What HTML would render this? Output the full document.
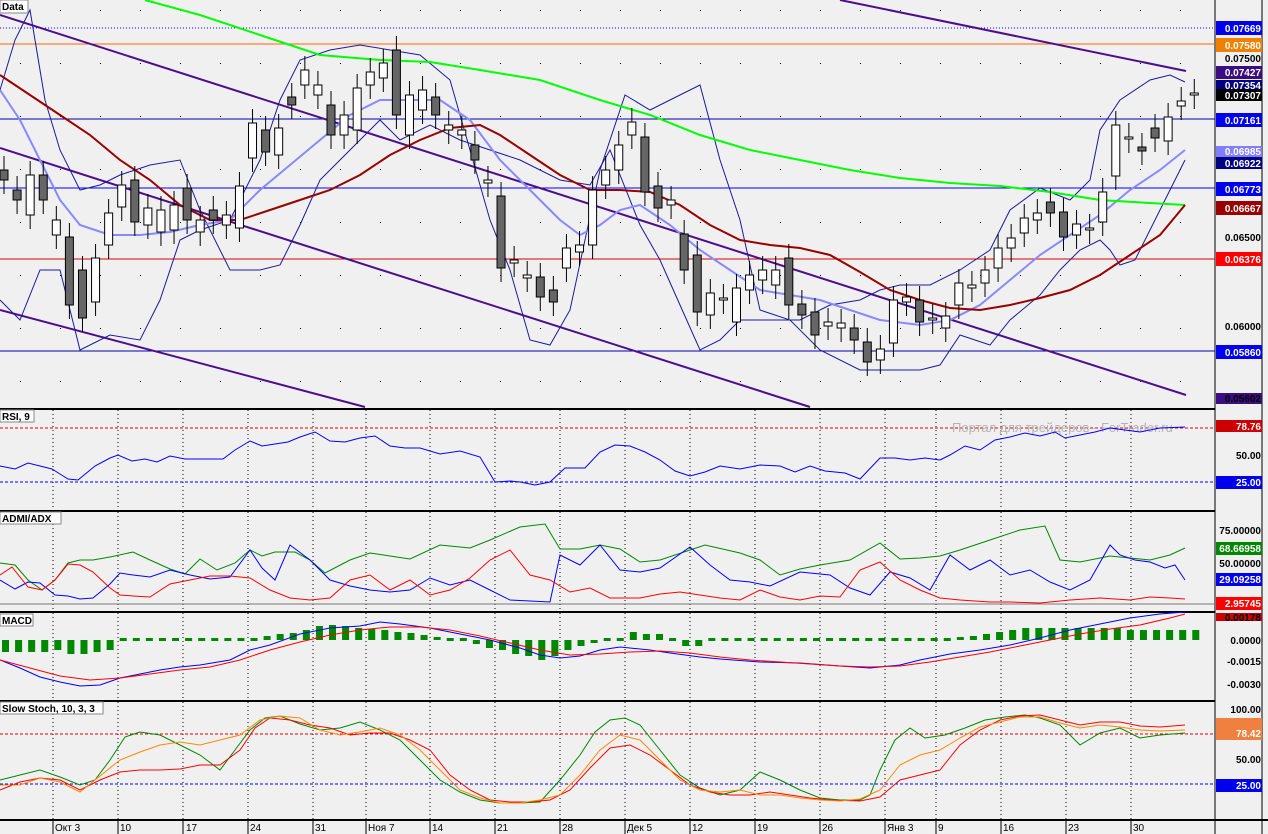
<!DOCTYPE html>
<html><head><meta charset="utf-8"><style>
html,body{margin:0;padding:0;background:#f0f0f0}
svg{display:block;font-family:"Liberation Sans",Arial,sans-serif}
.lbl{font-size:10px;font-weight:bold}
</style></head><body>
<svg id="s" width="1268" height="834" xmlns="http://www.w3.org/2000/svg">
<rect width="1268" height="834" fill="#f0f0f0"/>
<g id="grid"></g>
<g stroke="#000" stroke-width="2">
<line x1="0" y1="409" x2="1215" y2="409"/>
<line x1="0" y1="511" x2="1215" y2="511"/>
<line x1="0" y1="612" x2="1215" y2="612"/>
<line x1="0" y1="701" x2="1215" y2="701"/>
<line x1="0" y1="820" x2="1268" y2="820"/>
</g>
<line x1="1215" y1="0" x2="1215" y2="834" stroke="#000" stroke-width="1"/>
<line x1="1262" y1="0" x2="1262" y2="834" stroke="#000" stroke-width="1"/>
<line x1="0" y1="28" x2="1215" y2="28" stroke="#00f" stroke-dasharray="1,2"/>
<line x1="0" y1="44" x2="1215" y2="44" stroke="#f60"/>
<line x1="0" y1="119" x2="1215" y2="119" stroke="#00a"/>
<line x1="0" y1="188" x2="1215" y2="188" stroke="#00f"/>
<line x1="0" y1="259" x2="1215" y2="259" stroke="#d00"/>
<line x1="0" y1="351" x2="1215" y2="351" stroke="#00a"/>
<g stroke="#4b0e8c" stroke-width="2" fill="none">
<line x1="0" y1="15" x2="1186" y2="395"/>
<line x1="0" y1="310" x2="365" y2="407"/>
<line x1="840" y1="0" x2="1186" y2="71"/>
<line x1="0" y1="148" x2="810" y2="407"/>
</g>
<g fill="none" stroke-width="1">
<polyline stroke="#1a1aa0" points="0,300 20,320 40,270 60,270 80,350 110,335 140,340 160,300 180,240 200,230 230,220 260,160 280,100 300,60 330,50 360,45 390,50 420,55 450,80 470,150 490,220 510,270 530,340 550,345 570,310 600,170 625,95 650,110 680,95 700,85 720,160 740,220 760,310 790,320 820,350 860,370 880,370 920,370 940,365 960,335 990,345 1010,320 1040,295 1060,270 1080,250 1100,240 1110,250 1120,265 1135,260 1160,210 1185,160"/>
<polyline stroke="#1a1aa0" points="0,90 15,40 30,10 45,100 60,150 80,190 100,185 120,175 150,165 180,160 200,210 230,270 260,270 280,265 300,225 320,180 340,160 360,140 380,120 400,140 430,125 460,140 490,150 520,160 560,180 590,185 610,150 640,225 660,260 680,305 700,350 720,340 740,320 770,320 800,320 830,305 860,300 880,290 900,285 930,285 960,270 990,250 1010,210 1040,188 1070,200 1090,180 1100,130 1120,100 1150,80 1170,75 1185,82"/>
<polyline stroke="#8888ff" stroke-width="2" points="0,90 20,120 40,160 60,200 80,225 110,235 140,235 170,232 200,225 230,220 260,190 290,165 320,140 350,115 380,100 410,100 440,100 470,120 500,160 530,190 560,220 580,235 600,225 620,210 640,205 670,225 700,250 730,270 760,290 790,295 820,300 850,310 880,320 920,325 950,320 980,305 1010,280 1040,255 1070,235 1100,215 1130,190 1160,170 1185,150"/>
<polyline stroke="#0f0" stroke-width="2" points="145,0 200,15 260,35 320,55 380,60 430,62 480,70 540,80 600,100 650,115 700,135 750,150 800,160 850,170 900,178 950,183 1000,186 1050,192 1100,200 1150,203 1185,205"/>
<polyline stroke="#900" stroke-width="2" points="0,75 30,95 60,115 90,135 120,160 150,180 180,205 210,220 240,220 270,210 300,200 330,190 360,175 390,155 420,140 450,128 480,125 500,135 530,155 560,175 590,190 620,190 650,192 680,205 710,225 740,240 770,245 800,248 830,255 860,272 890,290 920,300 950,308 980,310 1010,305 1040,298 1070,290 1100,275 1130,255 1160,235 1185,205"/>
</g>
<g id="candles"></g>
<line x1="0" y1="428" x2="1215" y2="428" stroke="#d00" stroke-dasharray="3,2"/>
<line x1="0" y1="482" x2="1215" y2="482" stroke="#00f" stroke-dasharray="3,2"/>
<text x="952" y="432" font-size="13" fill="#b4b4b4">Портал для трейдеров - ForTrader.ru</text>
<polyline fill="none" stroke="#00f" points="0,466 15,469 28,463 40,466 52,469 60,474 68,479 78,480 95,466 110,458 118,455 132,461 145,459 157,462 170,456 185,459 223,459 235,450 250,441 262,446 275,444 288,442 300,437 315,432 330,441 345,442 360,438 375,436 390,446 405,448 420,448 440,454 460,451 480,457 495,482 510,481 520,482 535,485 550,482 565,468 585,468 600,452 615,445 630,446 645,452 660,460 675,471 690,476 705,472 720,466 740,469 760,465 780,466 795,472 810,466 825,471 845,473 860,479 880,458 895,458 910,460 925,458 940,460 950,455 965,446 980,450 995,440 1010,437 1025,433 1040,436 1055,432 1065,438 1080,435 1095,432 1110,428 1125,430 1140,432 1160,428 1185,427"/>
<line x1="0" y1="604" x2="1215" y2="604" stroke="#777"/>
<polyline fill="none" stroke="#080" points="0,563 15,565 28,580 42,590 55,580 68,563 80,560 93,560 110,557 133,552 150,560 170,569 185,574 200,559 217,570 235,563 250,550 262,556 275,552 295,552 310,560 325,573 350,560 370,553 390,556 410,559 440,545 470,548 490,540 520,527 545,524 560,549 580,549 600,545 620,549 640,562 660,560 690,550 705,545 740,553 760,560 780,575 800,569 820,565 850,560 880,543 900,559 920,558 940,556 960,550 990,540 1020,530 1045,526 1060,560 1080,562 1110,556 1130,558 1150,560 1170,555 1185,548"/>
<polyline fill="none" stroke="#00f" points="0,580 15,589 28,582 40,583 55,595 68,596 80,599 93,598 110,584 120,573 133,575 150,577 170,570 190,575 210,579 230,577 250,550 262,568 275,580 290,545 310,560 330,580 350,586 370,590 390,592 410,590 430,578 450,585 470,580 490,590 510,600 530,601 550,602 560,555 580,565 600,545 620,570 640,572 660,568 690,547 710,565 730,580 750,582 770,586 800,572 830,575 850,588 870,595 890,572 910,578 930,590 950,555 970,570 990,560 1010,575 1030,570 1050,582 1070,590 1090,580 1110,545 1120,555 1135,560 1150,562 1165,568 1175,565 1185,580"/>
<polyline fill="none" stroke="#f00" points="0,575 12,567 28,587 42,590 55,580 68,564 80,565 93,572 110,588 120,595 133,596 150,597 170,584 190,580 210,576 230,576 250,578 270,590 290,598 310,600 330,598 350,580 370,575 390,590 410,580 430,595 450,590 470,578 490,560 510,550 530,575 550,580 570,592 590,588 610,598 640,598 660,594 680,592 700,595 720,598 740,600 760,590 780,597 800,600 820,596 840,597 860,570 880,562 900,580 920,590 940,598 960,600 990,602 1010,602 1040,603 1070,600 1100,598 1130,600 1150,597 1170,598 1185,599"/>
<g id="macd"></g>
<polyline fill="none" stroke="#00f" points="0,660 20,668 40,677 60,682 80,686 100,685 120,678 140,674 160,670 180,667 200,665 230,660 250,650 270,645 300,634 330,628 360,626 380,622 400,624 430,628 460,634 490,640 520,648 540,655 560,658 580,656 600,650 620,647 650,650 670,653 700,657 720,659 760,662 800,663 840,666 870,668 900,665 920,660 950,654 980,650 1010,645 1040,638 1070,630 1100,624 1130,618 1160,614 1185,612"/>
<polyline fill="none" stroke="#f00" points="0,660 30,668 60,676 90,680 120,678 150,674 180,670 210,667 240,660 270,650 300,642 330,635 360,630 390,627 420,627 450,630 480,636 510,643 540,650 570,655 600,654 630,652 660,651 690,653 720,657 750,660 780,662 810,664 840,666 870,667 900,666 930,662 960,657 990,652 1020,646 1050,640 1080,634 1110,629 1140,625 1170,618 1185,614"/>
<line x1="0" y1="734" x2="1215" y2="734" stroke="#d00" stroke-dasharray="3,2"/>
<line x1="0" y1="784" x2="1215" y2="784" stroke="#00f" stroke-dasharray="3,2"/>
<g fill="none">
<polyline stroke="#080" points="0,780 20,775 40,770 60,777 80,785 95,780 110,760 125,737 140,732 160,735 180,745 200,755 220,770 235,750 250,730 265,718 280,716 300,724 320,730 340,728 360,722 380,730 400,740 420,760 440,780 460,792 480,800 500,803 520,803 540,802 560,780 580,755 595,732 610,720 625,718 640,725 660,750 680,775 700,788 720,795 740,790 760,772 780,780 800,790 820,798 840,800 860,800 870,795 880,770 895,740 910,728 925,738 945,735 965,728 985,720 1005,717 1025,715 1040,718 1060,725 1080,745 1100,733 1120,728 1140,738 1160,735 1185,733"/>
<polyline stroke="#f00" points="0,790 20,782 40,778 60,780 80,790 100,780 120,772 140,770 160,770 180,769 200,765 220,765 240,750 255,728 270,718 290,720 310,725 330,728 350,735 370,733 390,733 410,740 430,750 450,775 470,790 490,800 510,802 530,802 550,800 570,790 590,768 610,748 630,745 650,755 670,770 690,785 710,792 730,795 750,795 770,792 790,795 810,798 830,800 860,801 880,797 900,780 920,775 940,770 960,745 980,730 1000,720 1020,716 1040,715 1060,720 1080,725 1100,722 1120,722 1140,726 1160,727 1185,725"/>
<polyline stroke="#f80" points="0,785 20,785 40,778 60,782 80,792 100,776 120,760 140,752 160,745 180,742 200,745 220,740 240,735 260,720 280,716 300,718 320,730 340,735 360,732 380,728 400,735 420,750 440,770 460,790 480,798 500,803 520,803 540,800 560,795 580,775 600,750 620,735 640,740 660,760 680,780 700,790 720,792 740,790 760,795 780,795 800,798 820,800 840,801 860,799 880,790 900,765 920,755 940,750 960,738 980,727 1000,722 1020,717 1040,717 1060,723 1080,728 1100,725 1120,727 1140,730 1160,731 1185,730"/>
</g>
<g class="lbl">
<rect x="1216" y="21" width="46" height="14" fill="#0000ee"/><text x="1261" y="32" text-anchor="end" fill="#fff">0.07669</text>
<rect x="1216" y="38" width="46" height="14" fill="#f08000"/><text x="1261" y="49" text-anchor="end" fill="#fff">0.07580</text>
<text x="1261" y="62" text-anchor="end" fill="#000">0.07500</text>
<rect x="1216" y="66" width="46" height="13" fill="#3b0d80"/><text x="1261" y="76" text-anchor="end" fill="#fff">0.07427</text>
<rect x="1216" y="80" width="46" height="10" fill="#000080"/><text x="1261" y="89" text-anchor="end" fill="#fff">0.07354</text>
<rect x="1216" y="89" width="46" height="12" fill="#000"/><text x="1261" y="99" text-anchor="end" fill="#fff">0.07307</text>
<rect x="1216" y="113" width="46" height="14" fill="#0000ee"/><text x="1261" y="124" text-anchor="end" fill="#fff">0.07161</text>
<rect x="1216" y="146" width="46" height="11" fill="#8080ff"/><text x="1261" y="155" text-anchor="end" fill="#fff">0.06985</text>
<rect x="1216" y="157" width="46" height="12" fill="#000080"/><text x="1261" y="167" text-anchor="end" fill="#fff">0.06922</text>
<rect x="1216" y="182" width="46" height="14" fill="#0000ee"/><text x="1261" y="193" text-anchor="end" fill="#fff">0.06773</text>
<rect x="1216" y="201" width="46" height="14" fill="#900"/><text x="1261" y="212" text-anchor="end" fill="#fff">0.06667</text>
<text x="1261" y="241" text-anchor="end" fill="#000">0.06500</text>
<rect x="1216" y="252" width="46" height="14" fill="#f00"/><text x="1261" y="263" text-anchor="end" fill="#fff">0.06376</text>
<text x="1261" y="330" text-anchor="end" fill="#000">0.06000</text>
<rect x="1216" y="345" width="46" height="14" fill="#0000ee"/><text x="1261" y="356" text-anchor="end" fill="#fff">0.05860</text>
<rect x="1216" y="393" width="46" height="11" fill="#3b0d80"/><text x="1261" y="402" text-anchor="end" fill="#000">0.05602</text>
<rect x="1216" y="420" width="46" height="12" fill="#c00"/><text x="1261" y="430" text-anchor="end" fill="#fff">78.76</text>
<text x="1261" y="459" text-anchor="end" fill="#000">50.00</text>
<rect x="1216" y="476" width="46" height="13" fill="#0000ee"/><text x="1261" y="486" text-anchor="end" fill="#fff">25.00</text>
<text x="1261" y="534" text-anchor="end" fill="#000">75.00000</text>
<rect x="1216" y="542" width="46" height="13" fill="#080"/><text x="1261" y="552" text-anchor="end" fill="#fff">68.66958</text>
<text x="1261" y="567" text-anchor="end" fill="#000">50.00000</text>
<rect x="1216" y="573" width="46" height="13" fill="#0000ee"/><text x="1261" y="583" text-anchor="end" fill="#fff">29.09258</text>
<rect x="1216" y="597" width="46" height="13" fill="#f00"/><text x="1261" y="607" text-anchor="end" fill="#fff">2.95745</text>
<rect x="1216" y="613" width="46" height="8" fill="#c00"/><text x="1261" y="621" text-anchor="end" fill="#000">0.00178</text>
<text x="1261" y="644" text-anchor="end" fill="#000">0.0000</text>
<text x="1261" y="665" text-anchor="end" fill="#000">-0.0015</text>
<text x="1261" y="688" text-anchor="end" fill="#000">-0.0030</text>
<text x="1261" y="713" text-anchor="end" fill="#000">100.00</text>
<rect x="1216" y="718" width="46" height="22" fill="#f08040"/><text x="1261" y="737" text-anchor="end" fill="#fff">78.42</text>
<text x="1261" y="763" text-anchor="end" fill="#000">50.00</text>
<rect x="1216" y="779" width="46" height="13" fill="#0000ee"/><text x="1261" y="789" text-anchor="end" fill="#fff">25.00</text>
</g>
<g class="lbl" fill="#000">
<rect x="0" y="0" width="28" height="13" fill="#fff" stroke="#888"/><text x="2" y="10">Data</text>
<rect x="0" y="410" width="34" height="12" fill="#fff" stroke="#888"/><text x="2" y="420">RSI, 9</text>
<rect x="0" y="512" width="61" height="12" fill="#fff" stroke="#888"/><text x="2" y="522">ADMI/ADX</text>
<rect x="0" y="614" width="33" height="12" fill="#fff" stroke="#888"/><text x="2" y="624">MACD</text>
<rect x="0" y="702" width="103" height="12" fill="#fff" stroke="#888"/><text x="2" y="712">Slow Stoch, 10, 3, 3</text>
</g>
<g font-size="10" fill="#000">
<text x="55" y="831">Окт 3</text><text x="120" y="831">10</text><text x="186" y="831">17</text><text x="250" y="831">24</text><text x="315" y="831">31</text><text x="368" y="831">Ноя 7</text><text x="432" y="831">14</text><text x="497" y="831">21</text><text x="562" y="831">28</text><text x="627" y="831">Дек 5</text><text x="692" y="831">12</text><text x="757" y="831">19</text><text x="822" y="831">26</text><text x="887" y="831">Янв 3</text><text x="938" y="831">9</text><text x="1003" y="831">16</text><text x="1068" y="831">23</text><text x="1133" y="831">30</text>
</g>
</svg>
<script>
var NS="http://www.w3.org/2000/svg";
function el(p,t,a){var e=document.createElementNS(NS,t);for(var k in a)e.setAttribute(k,a[k]);p.appendChild(e);return e;}
var g=document.getElementById("grid");
var vx=[53,118,183,248,313,366,430,495,560,625,690,755,820,885,936,1001,1066,1131];
vx.forEach(function(x){[[410,511],[512,612],[613,701],[702,820]].forEach(function(r){el(g,"line",{x1:x,y1:r[0],x2:x,y2:r[1],stroke:"#000","stroke-dasharray":"1,3"});});
el(g,"line",{x1:x,y1:820,x2:x,y2:834,stroke:"#000"});});
for(var x=20;x<1215;x+=40)for(var y=10;y<408;y+=53)el(g,"rect",{x:x,y:y,width:1,height:1,fill:"#000"});
var d=[[170,180,1],[190,200,1],[175,215,0],[175,200,1],[220,235,0],[237,305,1],[270,318,1],[258,302,0],[213,245,0],[185,207,0],[180,222,1],[208,225,0],[210,232,0],[205,230,0],[188,220,1],[220,232,0],[210,220,1],[215,225,0],[186,228,0],[123,158,0],[130,152,1],[128,155,0],[97,105,1],[70,85,0],[85,95,0],[105,135,1],[115,135,0],[88,130,0],[72,85,0],[63,78,0],[50,115,1],[95,135,0],[90,110,0],[97,115,1],[125,130,0],[130,135,0],[145,160,1],[180,183,0],[196,268,1],[260,263,0],[275,278,0],[277,297,1],[290,302,1],[248,268,0],[245,252,0],[190,245,0],[170,185,0],[145,170,0],[122,135,0],[137,192,1],[186,208,1],[200,205,0],[234,270,1],[255,312,1],[293,315,0],[298,300,0],[288,322,0],[275,290,0],[270,280,0],[270,285,0],[258,305,1],[304,315,1],[312,335,1],[322,326,0],[323,328,0],[328,340,1],[342,362,1],[349,360,0],[300,343,0],[297,302,0],[300,322,1],[318,320,0],[316,328,0],[283,305,0],[285,288,0],[270,283,0],[248,268,0],[238,248,0],[218,233,0],[213,220,0],[202,213,1],[212,237,1],[224,235,0],[228,230,0],[192,222,0],[125,176,0],[137,139,0],[147,151,1],[128,138,1],[117,141,0],[101,106,0],[93,95,0]];
var c=document.getElementById("candles");
d.forEach(function(v,i){var x=4+i*13.08;el(c,"line",{x1:x,y1:v[0]-14,x2:x,y2:v[1]+14,stroke:"#000"});
el(c,"rect",{x:x-4,y:v[0],width:8,height:Math.max(2,v[1]-v[0]),fill:v[2]?"#666":"#fff",stroke:"#000"});});
var m=document.getElementById("macd");
var h=[-12,-12,-12,-12,-10,-14,-14,-12,-10,-2,0,0,0,0,0,0,0,0,0,0,4,6,7,10,14,15,14,12,11,10,8,7,5,3,2,0,-4,-8,-10,-14,-16,-20,-16,-10,-6,-3,0,2,8,6,6,2,-6,-6,-2,0,-2,-2,-2,-2,-2,-2,-2,-2,-2,-2,-2,-2,0,0,0,2,2,3,4,6,8,10,12,12,12,12,12,12,12,12,10,10,10,10,10,10];
h.forEach(function(v,i){var x=2+i*13.08;var y0=640;if(Math.abs(v)<=2){el(m,"rect",{x:x,y:638,width:7,height:3,fill:"#080"});}else el(m,"rect",{x:x,y:v>0?y0-v:y0,width:7,height:Math.abs(v),fill:"#080"});});
</script>
</body></html>
